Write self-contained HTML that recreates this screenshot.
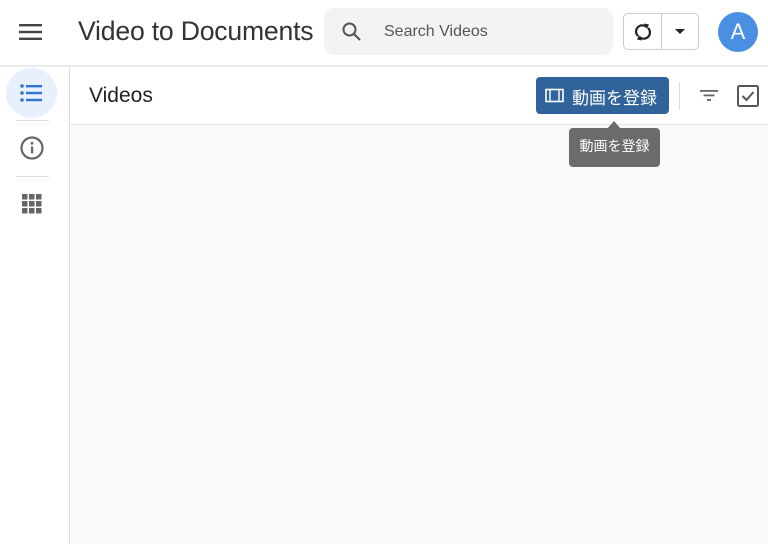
<!DOCTYPE html>
<html><head><meta charset="utf-8"><style>
*{margin:0;padding:0;box-sizing:border-box}
body{width:768px;height:544px;overflow:hidden;background:#fff;font-family:"Liberation Sans","Noto Sans CJK JP",sans-serif;position:relative}
.a{position:absolute}
</style></head><body>
<svg class="a" style="left:19px;top:22px" width="24" height="20" viewBox="0 0 24 20"><rect x="0" y="2" width="23" height="2.4" fill="#444"/><rect x="0" y="8.8" width="23" height="2.4" fill="#444"/><rect x="0" y="15.6" width="23" height="2.4" fill="#444"/></svg>
<div class="a" style="left:78px;top:16px;font-size:26.6px;color:#333;letter-spacing:-0.2px">Video to Documents</div>
<div class="a" style="left:324px;top:8px;width:289px;height:47px;background:#f1f3f4;border-radius:10px"></div>
<svg class="a" style="left:340px;top:20px" width="24" height="24" viewBox="0 0 24 24"><circle cx="9.5" cy="9.5" r="6" fill="none" stroke="#555" stroke-width="2"/><line x1="14" y1="14" x2="20" y2="20" stroke="#555" stroke-width="2.2"/></svg>
<div class="a" style="left:384px;top:23px;font-size:16px;color:#555">Search Videos</div>
<div class="a" style="left:623px;top:13px;width:76px;height:37px;border:1px solid #ccc;border-radius:5px"></div>
<div class="a" style="left:661px;top:13px;width:1px;height:37px;background:#ccc"></div>
<svg class="a" style="left:631px;top:20px" width="24" height="24" viewBox="0 0 24 24"><path d="M7 16A6 6 0 0 1 15.5 7M17 8A6 6 0 0 1 8.5 17" fill="none" stroke="#222" stroke-width="2.2"/><path d="M13 3.5l5 1-2 4.5z" fill="#222"/><path d="M11 20.5l-5-1 2-4.5z" fill="#222"/></svg>
<svg class="a" style="left:674px;top:28px" width="12" height="8"><path d="M1 1h10L6 6z" fill="#222"/></svg>
<div class="a" style="left:718px;top:12px;width:40px;height:40px;border-radius:50%;background:#4a90e2;color:#fff;font-size:22px;text-align:center;line-height:40px">A</div>
<div class="a" style="left:0;top:65px;width:768px;height:2px;background:#e8eaed"></div>
<div class="a" style="left:69px;top:67px;width:1px;height:477px;background:#ddd"></div>
<div class="a" style="left:6px;top:68px;width:51px;height:50px;border-radius:50%;background:#e8f0fe"></div>
<svg class="a" style="left:20px;top:83px" width="24" height="20" viewBox="0 0 24 20"><g fill="#2f74d0"><circle cx="2" cy="3" r="1.8"/><circle cx="2" cy="10" r="1.8"/><circle cx="2" cy="17" r="1.8"/><rect x="6" y="2" width="16" height="2.4"/><rect x="6" y="8.8" width="16" height="2.4"/><rect x="6" y="15.8" width="16" height="2.4"/></g></svg>
<div class="a" style="left:16px;top:120px;width:33px;height:1px;background:#ddd"></div>
<svg class="a" style="left:20px;top:136px" width="24" height="24" viewBox="0 0 24 24"><circle cx="12" cy="12" r="10.5" fill="none" stroke="#666" stroke-width="2.2"/><rect x="11" y="10.5" width="2.2" height="7" fill="#666"/><circle cx="12" cy="7.3" r="1.4" fill="#666"/></svg>
<div class="a" style="left:16px;top:176px;width:33px;height:1px;background:#ddd"></div>
<svg class="a" style="left:22px;top:194px" width="20" height="20" viewBox="0 0 20 20"><g fill="#666"><rect x="0" y="0" width="5.5" height="5.5"/><rect x="7" y="0" width="5.5" height="5.5"/><rect x="14" y="0" width="5.5" height="5.5"/><rect x="0" y="7" width="5.5" height="5.5"/><rect x="7" y="7" width="5.5" height="5.5"/><rect x="14" y="7" width="5.5" height="5.5"/><rect x="0" y="14" width="5.5" height="5.5"/><rect x="7" y="14" width="5.5" height="5.5"/><rect x="14" y="14" width="5.5" height="5.5"/></g></svg>
<div class="a" style="left:70px;top:124px;width:698px;height:420px;background:#f8f9fa;border-top:1px solid #e3e3e3"></div>
<div class="a" style="left:89px;top:84px;font-size:21px;color:#222">Videos</div>
<div class="a" style="left:536px;top:77px;width:133px;height:37px;background:#2f6399;border-radius:4px"></div>
<svg class="a" style="left:545px;top:88px" width="19" height="15" viewBox="0 0 19 15"><rect x="1" y="1.5" width="17" height="12" fill="none" stroke="#fff" stroke-width="1.6"/><line x1="5" y1="1.5" x2="5" y2="13.5" stroke="#fff" stroke-width="1.4"/><line x1="14" y1="1.5" x2="14" y2="13.5" stroke="#fff" stroke-width="1.4"/></svg>
<div class="a" style="left:572px;top:84px;font-size:17px;color:#fff">動画を登録</div>
<div class="a" style="left:679px;top:82px;width:1px;height:28px;background:#ddd"></div>
<svg class="a" style="left:700px;top:88px" width="18" height="14"><g fill="#666"><rect x="0" y="2" width="18" height="1.8"/><rect x="3.5" y="6.5" width="11" height="1.8"/><rect x="7" y="11" width="4" height="1.8"/></g></svg>
<svg class="a" style="left:737px;top:85px" width="22" height="22" viewBox="0 0 22 22"><rect x="1" y="1" width="20" height="20" rx="1.5" fill="none" stroke="#555" stroke-width="2"/><path d="M5.5 11l4 4 7-8" fill="none" stroke="#555" stroke-width="2"/></svg>
<svg class="a" style="left:607px;top:121px" width="14" height="8"><path d="M0 8L7 0 14 8z" fill="#6b6b6b"/></svg>
<div class="a" style="left:569px;top:128px;width:91px;height:39px;background:#6b6b6b;border-radius:4px;color:#fff;font-size:14px;text-align:center;line-height:37px">動画を登録</div>
</body></html>
